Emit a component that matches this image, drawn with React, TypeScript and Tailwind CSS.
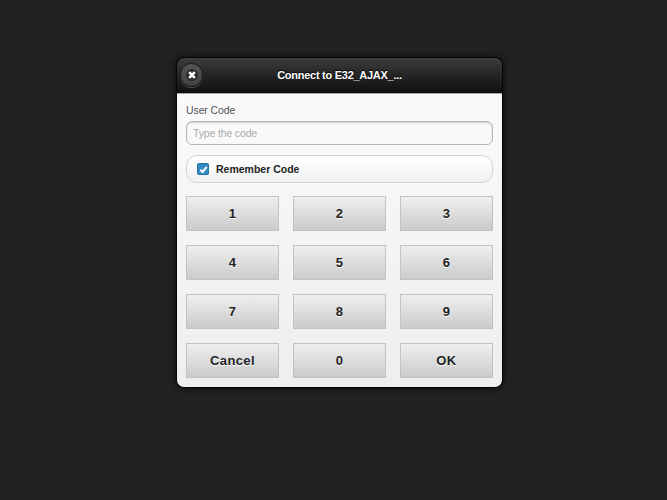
import { useState } from 'react'
import clsx from 'clsx'

const KEYS = ['1', '2', '3', '4', '5', '6', '7', '8', '9', 'Cancel', '0', 'OK']

interface KeypadButtonProps {
  label: string
  onClick: () => void
}

function KeypadButton({ label, onClick }: KeypadButtonProps) {
  return (
    <button
      type="button"
      onClick={onClick}
      className="h-[35px] border border-[#c2c2c2] bg-linear-to-b from-[#efefef] to-[#cbcbcb] text-[13px] leading-none font-bold tracking-[0.4px] text-[#222] [text-shadow:0_1px_0_#fff]"
    >
      {label}
    </button>
  )
}

function CloseButton() {
  return (
    <button
      type="button"
      aria-label="Close"
      className="flex h-[24px] w-[23px] shrink-0 items-center justify-center rounded-full border border-[#191919] bg-linear-to-b from-[#555] to-[#424242] shadow-[0_1px_0_#4a4a4a]"
    >
      <span className="flex h-3 w-3 shrink-0 items-center justify-center rounded-full bg-[#2b2b2b]">
        <svg viewBox="0 0 8 8" className="h-2 w-2" stroke="#fff" strokeWidth="2.6" fill="none">
          <path d="M1.2 1.2 6.8 6.8M6.8 1.2 1.2 6.8" />
        </svg>
      </span>
    </button>
  )
}

export default function App() {
  const [code, setCode] = useState('')
  const [remember, setRemember] = useState(true)

  const handleKey = (key: string) => {
    if (key === 'OK') return
    if (key === 'Cancel') {
      setCode('')
      return
    }
    setCode((prev) => prev + key)
  }

  return (
    <div className="flex h-screen justify-center overflow-hidden bg-[#222] pt-[58px] pl-[12px] font-['Liberation_Sans',Arial,sans-serif]">
      <div className="flex h-[329px] w-[325px] flex-col rounded-[7px] shadow-[0_0_0_1px_#060606,0_0_9px_#000]">
        {/* Header */}
        <header className="flex h-[35px] shrink-0 items-center rounded-t-[7px] border-b border-[#0a0a0a] bg-linear-to-b from-[#3c3c3c] to-[#111] pl-[3px]">
          <CloseButton />
          <h1 className="mr-[26px] flex-1 pt-px text-center text-[11px] font-bold tracking-[-0.27px] text-white [text-shadow:0_-1px_1px_#000]">
            Connect to E32_AJAX_...
          </h1>
        </header>

        <div className="flex-1 rounded-b-[7px] border-t border-[#aaa] bg-linear-to-b from-[#fafafa] to-[#eee] px-[9px] pt-[9px]">
          <label
            htmlFor="code"
            className="block h-[18px] text-[10.5px] leading-[14px] tracking-[-0.1px] text-[#555]"
          >
            User Code
          </label>
          <input
            id="code"
            value={code}
            onChange={(e) => setCode(e.target.value)}
            placeholder="Type the code"
            className="block h-[24px] w-full rounded-[6px] border border-[#b5b5b5] bg-[#f9f9f9] px-[6px] text-[10.5px] tracking-[-0.15px] text-[#333] shadow-[inset_0_1px_2px_rgba(0,0,0,0.15)] outline-none placeholder:text-[#aaa]"
          />

          {/* Remember row */}
          <label className="relative mt-[10px] flex h-[28px] items-center gap-[7px] rounded-[11px] border border-[#d3d3d3] bg-linear-to-b from-white to-[#f0f0f0] pl-[10px] text-[10.5px] font-bold text-[#222] [text-shadow:0_1px_0_#fff]">
            <input
              type="checkbox"
              checked={remember}
              onChange={(e) => setRemember(e.target.checked)}
              className="sr-only"
            />
            <span
              className={clsx(
                'flex h-[12px] w-[12px] items-center justify-center rounded-[1.5px] border',
                remember ? 'border-[#2373a5] bg-[#3388c1]' : 'border-[#aaa] bg-white'
              )}
            >
              {remember && (
                <svg viewBox="0 0 9 9" className="h-[9px] w-[9px] shrink-0" fill="none" stroke="#fff" strokeWidth="2">
                  <path d="M1.2 4.7 3.6 7 7.8 1.8" />
                </svg>
              )}
            </span>
            <span className="pt-px">Remember Code</span>
          </label>

          {/* Keypad */}
          <div className="mt-[13px] grid grid-cols-3 gap-x-[14px] gap-y-[14px]">
            {KEYS.map((key) => (
              <KeypadButton key={key} label={key} onClick={() => handleKey(key)} />
            ))}
          </div>
        </div>
      </div>
    </div>
  )
}
